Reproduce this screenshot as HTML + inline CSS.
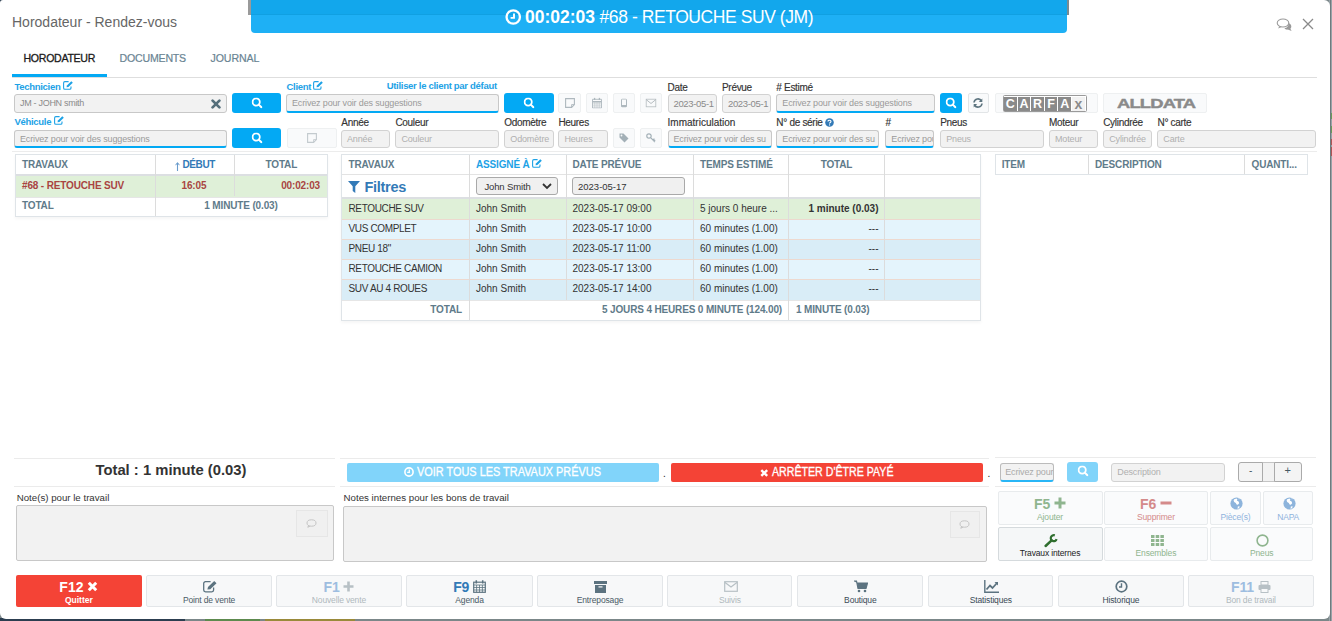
<!DOCTYPE html>
<html><head><meta charset="utf-8">
<style>
*{box-sizing:border-box;margin:0;padding:0}
html,body{width:1332px;height:621px;overflow:hidden;background:#7b8789;font-family:"Liberation Sans",sans-serif}
.a{position:absolute;white-space:nowrap}
#modal{position:absolute;left:0;top:0;width:1330px;height:619px;background:#fff;border-radius:3px 6px 6px 6px;overflow:hidden}
.lbl{position:absolute;white-space:nowrap;font-size:10px;color:#333;line-height:10px;letter-spacing:-0.3px;-webkit-text-stroke:0.15px #333;margin-top:0.8px}
.blbl{position:absolute;white-space:nowrap;font-size:9.5px;color:#1da2e6;font-weight:bold;line-height:10px;letter-spacing:-0.3px;margin-top:-1.2px}
.inp{position:absolute;background:#f2f2f2;border:1px solid #c8c8c8;border-radius:3px;height:19px;font-size:9px;letter-spacing:-0.15px;color:#9a9a9a;padding:0 0 0 5px;line-height:17px;overflow:hidden;white-space:nowrap}
.inp.bb{border-bottom:2px solid #03a9f4;line-height:16px}
.inp.dis{border-color:#d2d2d2;color:#b0b0b0}
.sbtn{position:absolute;background:#03a9f4;border-radius:3px;height:20px}
.sbtn svg{position:absolute;left:50%;top:50%;transform:translate(-50%,-50%)}
.ibtn{position:absolute;background:#f9fafb;border:1px solid #eef0f1;border-radius:2px;height:20px}
.ibtn svg{position:absolute;left:50%;top:50%;transform:translate(-50%,-50%)}
.th{position:absolute;white-space:nowrap;font-size:10px;font-weight:bold;color:#5f7b8a;line-height:12px;letter-spacing:-0.15px}
.td{position:absolute;white-space:nowrap;font-size:10px;color:#333;line-height:12px}
.hl{position:absolute;height:1px;background:#e3e3e3}
.vl{position:absolute;width:1px;background:#dcdcdc}
.tb{position:absolute;background:#f7f8f9;border:1px solid #e3e6e9;border-radius:2px}
.tb .k{position:absolute;left:0;right:0;text-align:center;white-space:nowrap;letter-spacing:-0.15px}
</style></head><body>
<!-- background strips -->
<div class="a" style="left:0;top:618px;width:185px;height:3px;background:#2c3e50"></div>
<div class="a" style="left:205px;top:618px;width:55px;height:3px;background:#5d8a4e"></div>
<div class="a" style="left:265px;top:618px;width:90px;height:3px;background:#9a8a3a"></div>
<div class="a" style="left:1329px;top:0;width:3px;height:621px;background:#98a3a8"></div>
<div class="a" style="left:1330px;top:0;width:1px;height:621px;background:#6f7b7e"></div>
<div class="a" style="left:1331px;top:113px;width:1px;height:6px;background:#6a9a5a"></div>
<div class="a" style="left:1331px;top:126px;width:1px;height:7px;background:#6a9a5a"></div>
<div class="a" style="left:1331px;top:139px;width:1px;height:6px;background:#b05555"></div>
<div class="a" style="left:1331px;top:147px;width:1px;height:9px;background:#b05555"></div>
<div class="a" style="left:0;top:0;width:8px;height:8px;background:#2c3e50"></div>

<div id="modal">
<!-- title -->
<div class="a" style="left:12px;top:14px;font-size:14px;line-height:16px;color:#666">Horodateur - Rendez-vous</div>

<!-- blue timer bar -->
<div class="a" style="left:248px;top:0;width:3px;height:15px;background:#9a9a9a"></div>
<div class="a" style="left:1067px;top:0;width:2px;height:15px;background:#7a8a90"></div>
<div class="a" style="left:251px;top:0;width:816px;height:33px;background:#1eb0f5;border-radius:0 0 4px 4px"></div>
<div class="a" style="left:251px;top:0;width:816px;height:15px;background:#12a7ec"></div><div class="a" style="left:251px;top:14px;width:816px;height:1px;background:#10a0e2"></div>
<svg class="a" style="left:505px;top:8.5px" width="16.5" height="16" viewBox="0 0 16.5 16"><circle cx="8.25" cy="8" r="6.7" fill="none" stroke="#fff" stroke-width="2.3"/><path d="M9 4.5V8.9H5.6" fill="none" stroke="#fff" stroke-width="1.9"/></svg>
<div class="a" style="left:525px;top:7px;font-size:17.5px;line-height:20px;color:#fff"><b>00:02:03</b><span style="letter-spacing:-0.42px"> #68 - RETOUCHE SUV (JM)</span></div>

<!-- header right icons -->
<svg class="a" style="left:1276px;top:17px" width="18" height="16" viewBox="0 0 18 16"><ellipse cx="7" cy="6" rx="5.8" ry="4" fill="none" stroke="#9a9a9a" stroke-width="1.1"/><path d="M3.2 9.3L2.2 11.6 5.6 10.1Z" fill="#9a9a9a"/><path d="M12.6 6.2C15.2 6.8 16.3 9.8 14.4 11.8L15.6 14 11.8 12.6C10.4 12.8 9 12.2 8.4 11.3 11.2 10.9 12.9 8.8 12.6 6.2Z" fill="#9a9a9a"/></svg>
<svg class="a" style="left:1302px;top:18px" width="12" height="12" viewBox="0 0 12 12"><path d="M1 1L11 11M11 1L1 11" stroke="#8a8a8a" stroke-width="1.3"/></svg>

<!-- tabs -->
<div class="a" style="left:23.5px;top:52px;font-size:10.6px;line-height:12px;color:#1a1a1a;letter-spacing:-0.3px;-webkit-text-stroke:0.3px #1a1a1a">HORODATEUR</div>
<div class="a" style="left:119.5px;top:52px;font-size:10.6px;line-height:12px;color:#6a8493;letter-spacing:-0.2px;-webkit-text-stroke:0.2px #6a8493">DOCUMENTS</div>
<div class="a" style="left:210.5px;top:52px;font-size:10.6px;line-height:12px;color:#6a8493;letter-spacing:-0.1px;-webkit-text-stroke:0.2px #6a8493">JOURNAL</div>
<div class="a" style="left:12px;top:77px;width:1305px;height:1px;background:#dedede"></div>
<div class="a" style="left:12px;top:74px;width:95px;height:3px;background:#03a9f4"></div>

<!-- ===== FORM ROW 1 ===== -->
<div class="blbl" style="left:14.5px;top:82px">Technicien <svg width="10" height="9" viewBox="0 0 10 9" style="vertical-align:0px"><path d="M5.6 0.6H1.9A1.3 1.3 0 0 0 0.6 1.9V6.9A1.3 1.3 0 0 0 1.9 8.2H6.7A1.3 1.3 0 0 0 8 6.9V5.4" fill="none" stroke="#1da2e6" stroke-width="1.1"/><path d="M3.5 6.3L3.9 4.6 8.3 0.2 9.8 1.7 5.4 6Z" fill="#1da2e6"/></svg></div>
<div class="inp" style="left:14px;top:94px;width:213px;color:#8a8a8a;letter-spacing:-0.3px">JM - JOHN smith</div>
<svg class="a" style="left:210.5px;top:98.5px" width="10" height="10" viewBox="0 0 10 10"><path d="M1.6 1.6L8.4 8.4M8.4 1.6L1.6 8.4" stroke="#56707c" stroke-width="2.7" stroke-linecap="round"/></svg>
<div class="sbtn" style="left:232px;top:93px;width:49px"><svg width="11" height="11" viewBox="0 0 11 11" style="margin-top:-0.5px"><circle cx="4.7" cy="4.5" r="3.6" fill="none" stroke="#fff" stroke-width="1.8"/><path d="M7.3 7.1L9.9 9.7" stroke="#fff" stroke-width="2" stroke-linecap="round"/></svg></div>

<div class="blbl" style="left:286.5px;top:82px">Client <svg width="10" height="9" viewBox="0 0 10 9" style="vertical-align:0px"><path d="M5.6 0.6H1.9A1.3 1.3 0 0 0 0.6 1.9V6.9A1.3 1.3 0 0 0 1.9 8.2H6.7A1.3 1.3 0 0 0 8 6.9V5.4" fill="none" stroke="#1da2e6" stroke-width="1.1"/><path d="M3.5 6.3L3.9 4.6 8.3 0.2 9.8 1.7 5.4 6Z" fill="#1da2e6"/></svg></div>
<div class="blbl" style="left:386.7px;top:82px">Utiliser le client par défaut</div>
<div class="inp bb" style="left:286px;top:94px;width:213px">Ecrivez pour voir des suggestions</div>
<div class="sbtn" style="left:504px;top:93px;width:50px"><svg width="11" height="11" viewBox="0 0 11 11" style="margin-top:-0.5px"><circle cx="4.7" cy="4.5" r="3.6" fill="none" stroke="#fff" stroke-width="1.8"/><path d="M7.3 7.1L9.9 9.7" stroke="#fff" stroke-width="2" stroke-linecap="round"/></svg></div>
<div class="ibtn" style="left:558px;top:93px;width:23px"><svg width="10" height="10" viewBox="0 0 10 10"><path d="M0.6 0.6H9.4V6.6L6.6 9.4H0.6Z" fill="none" stroke="#aeb8be" stroke-width="1.1"/><path d="M6.6 9.4V6.6H9.4" fill="none" stroke="#aeb8be" stroke-width="0.9"/></svg></div>
<div class="ibtn" style="left:586px;top:93px;width:22px"><svg width="10" height="11" viewBox="0 0 10 11"><path d="M0.5 1.8H9.5V10.5H0.5Z" fill="none" stroke="#aeb8be" stroke-width="0.9"/><path d="M0.5 4.3H9.5" stroke="#aeb8be" stroke-width="1.4"/><path d="M0.5 6.4h9M0.5 8.4h9M2.75 4v6.5M5 4v6.5M7.25 4v6.5" stroke="#b8c1c6" stroke-width="0.6"/><path d="M2.6 0.3v2.3M7.4 0.3v2.3" stroke="#aeb8be" stroke-width="1.3"/></svg></div>
<div class="ibtn" style="left:613px;top:93px;width:22px"><svg width="6" height="9" viewBox="0 0 6 9"><rect x="0.5" y="0.5" width="5" height="8" rx="0.8" fill="none" stroke="#aeb8be" stroke-width="1"/><rect x="0.5" y="6.5" width="5" height="2" fill="#aeb8be"/></svg></div>
<div class="ibtn" style="left:640px;top:93px;width:22px"><svg width="11" height="9" viewBox="0 0 11 9"><rect x="0.6" y="0.6" width="9.8" height="7.8" fill="none" stroke="#b5bcc0" stroke-width="1"/><path d="M0.6 1L5.5 5 10.4 1" fill="none" stroke="#b5bcc0"/></svg></div>

<div class="lbl" style="left:667.6px;top:82px">Date</div>
<div class="inp dis" style="left:667.5px;top:94px;width:49px;padding-left:5px;font-size:9.5px;letter-spacing:-0.35px;color:#8a8a8a">2023-05-1</div>
<div class="lbl" style="left:722px;top:82px">Prévue</div>
<div class="inp dis" style="left:722px;top:94px;width:49px;padding-left:5px;font-size:9.5px;letter-spacing:-0.35px;color:#8a8a8a">2023-05-1</div>
<div class="lbl" style="left:776.3px;top:82px"># Estimé</div>
<div class="inp bb" style="left:776.3px;top:94px;width:158.5px">Ecrivez pour voir des suggestions</div>
<div class="sbtn" style="left:940px;top:93px;width:22px"><svg width="11" height="11" viewBox="0 0 11 11" style="margin-top:-0.5px"><circle cx="4.7" cy="4.5" r="3.6" fill="none" stroke="#fff" stroke-width="1.8"/><path d="M7.3 7.1L9.9 9.7" stroke="#fff" stroke-width="2" stroke-linecap="round"/></svg></div>
<div class="ibtn" style="left:967.5px;top:93px;width:21px;border-color:#e2e5e7"><svg width="11" height="10" viewBox="0 0 11 10"><path d="M1.5 4.5A4 4 0 0 1 9 3" fill="none" stroke="#5e7580" stroke-width="1.6"/><path d="M9.8 0.5V4H6.3Z" fill="#5e7580"/><path d="M9.5 5.5A4 4 0 0 1 2 7" fill="none" stroke="#5e7580" stroke-width="1.6"/><path d="M1.2 9.5V6H4.7Z" fill="#5e7580"/></svg></div>
<div class="ibtn" style="left:994.5px;top:93px;width:103px">
 <div class="a" style="left:7px;top:1.2px;width:84px;height:16.6px;background:#fff;border:1px solid #9a9a9a;border-radius:1.5px"><div class="a" style="left:0.5px;top:0.5px;width:12.6px;height:14.6px;background:#8a8a8a;color:#fff;font-size:12.5px;line-height:14px;font-weight:bold;text-align:center">C</div><div class="a" style="left:14.1px;top:0.5px;width:12.6px;height:14.6px;background:#8a8a8a;color:#fff;font-size:12.5px;line-height:14px;font-weight:bold;text-align:center">A</div><div class="a" style="left:27.7px;top:0.5px;width:12.6px;height:14.6px;background:#8a8a8a;color:#fff;font-size:12.5px;line-height:14px;font-weight:bold;text-align:center">R</div><div class="a" style="left:41.3px;top:0.5px;width:12.6px;height:14.6px;background:#8a8a8a;color:#fff;font-size:12.5px;line-height:14px;font-weight:bold;text-align:center">F</div><div class="a" style="left:54.9px;top:0.5px;width:12.6px;height:14.6px;background:#8a8a8a;color:#fff;font-size:12.5px;line-height:14px;font-weight:bold;text-align:center">A</div><div class="a" style="left:68.5px;top:0.5px;width:13px;height:14.6px;background:#f2f2f2"></div><div class="a" style="left:69px;top:1px;width:12px;text-align:center;font-size:14px;line-height:15px;font-weight:bold;color:#8a8a8a">x</div></div>
</div>
<div class="ibtn" style="left:1103.2px;top:93px;width:104px">
 <div class="a" style="left:12.5px;top:2.5px;font-size:13.5px;line-height:14px;font-weight:bold;color:#8a8a8a;letter-spacing:-0.6px;transform:scaleX(1.36);transform-origin:0 0;-webkit-text-stroke:0.4px #8a8a8a">ALLDATA</div>
</div>

<!-- ===== FORM ROW 2 ===== -->
<div class="blbl" style="left:14.5px;top:117px">Véhicule <svg width="10" height="9" viewBox="0 0 10 9" style="vertical-align:0px"><path d="M5.6 0.6H1.9A1.3 1.3 0 0 0 0.6 1.9V6.9A1.3 1.3 0 0 0 1.9 8.2H6.7A1.3 1.3 0 0 0 8 6.9V5.4" fill="none" stroke="#1da2e6" stroke-width="1.1"/><path d="M3.5 6.3L3.9 4.6 8.3 0.2 9.8 1.7 5.4 6Z" fill="#1da2e6"/></svg></div>
<div class="inp bb" style="left:14px;top:129.5px;width:213px;height:18.5px">Ecrivez pour voir des suggestions</div>
<div class="sbtn" style="left:232px;top:128px;width:49px"><svg width="11" height="11" viewBox="0 0 11 11" style="margin-top:-0.5px"><circle cx="4.7" cy="4.5" r="3.6" fill="none" stroke="#fff" stroke-width="1.8"/><path d="M7.3 7.1L9.9 9.7" stroke="#fff" stroke-width="2" stroke-linecap="round"/></svg></div>
<div class="ibtn" style="left:286.5px;top:128px;width:50px"><svg width="10" height="10" viewBox="0 0 10 10"><path d="M0.6 0.6H9.4V6.6L6.6 9.4H0.6Z" fill="none" stroke="#c3cace" stroke-width="1.1"/><path d="M6.6 9.4V6.6H9.4" fill="none" stroke="#c3cace" stroke-width="0.9"/></svg></div>
<div class="lbl" style="left:341.3px;top:117px">Année</div>
<div class="inp dis" style="left:341px;top:129.5px;width:48.5px;height:18px">Année</div>
<div class="lbl" style="left:395.4px;top:117px">Couleur</div>
<div class="inp dis" style="left:395.4px;top:129.5px;width:103.3px;height:18px">Couleur</div>
<div class="lbl" style="left:504.3px;top:117px">Odomètre</div>
<div class="inp dis" style="left:504.3px;top:129.5px;width:49.4px;height:18px">Odomètre</div>
<div class="lbl" style="left:558.4px;top:117px">Heures</div>
<div class="inp dis" style="left:558.4px;top:129.5px;width:49.3px;height:18px">Heures</div>
<div class="ibtn" style="left:613px;top:128px;width:22px"><svg width="10" height="10" viewBox="0 0 10 10"><path d="M0.5 0.5H4.5L9.5 5.5 5.5 9.5 0.5 4.5Z" fill="#a3b0b7"/><circle cx="2.5" cy="2.5" r="0.9" fill="#f9fafb"/></svg></div>
<div class="ibtn" style="left:640px;top:128px;width:22px"><svg width="10" height="10" viewBox="0 0 10 10"><circle cx="3" cy="3" r="2.2" fill="none" stroke="#a3b0b7" stroke-width="1.2"/><path d="M4.6 4.6L9 9M7 7L8.4 5.6M8 8L9.2 6.8" stroke="#a3b0b7" stroke-width="1.2"/></svg></div>
<div class="lbl" style="left:667.6px;top:117px;letter-spacing:0">Immatriculation</div>
<div class="inp bb" style="left:667.5px;top:129.5px;width:104px;height:18px">Ecrivez pour voir des su</div>
<div class="lbl" style="left:776.3px;top:117px">N° de série <svg width="9" height="9" viewBox="0 0 9 9" style="vertical-align:-1px"><circle cx="4.5" cy="4.5" r="4.3" fill="#337ab7"/><path d="M3 3.4C3 1.8 6 1.8 6 3.4 6 4.5 4.5 4.4 4.5 5.6" fill="none" stroke="#fff" stroke-width="1.1"/><rect x="4" y="6.4" width="1.1" height="1.1" fill="#fff"/></svg></div>
<div class="inp bb" style="left:776.3px;top:129.5px;width:103.1px;height:18px">Ecrivez pour voir des su</div>
<div class="lbl" style="left:885.5px;top:117px">#</div>
<div class="inp bb" style="left:885.3px;top:129.5px;width:49.2px;height:18px">Ecrivez pour voir des suggestions</div>
<div class="lbl" style="left:940.2px;top:117px">Pneus</div>
<div class="inp dis" style="left:940.2px;top:129.5px;width:103.5px;height:18px">Pneus</div>
<div class="lbl" style="left:1049px;top:117px">Moteur</div>
<div class="inp dis" style="left:1049px;top:129.5px;width:48.5px;height:18px">Moteur</div>
<div class="lbl" style="left:1103.2px;top:117px">Cylindrée</div>
<div class="inp dis" style="left:1103.2px;top:129.5px;width:49.3px;height:18px">Cylindrée</div>
<div class="lbl" style="left:1157.5px;top:117px">N° carte</div>
<div class="inp dis" style="left:1157.3px;top:129.5px;width:158.5px;height:18px">Carte</div>

<div class="hl" style="left:12px;top:151px;width:1305px;background:#ececec"></div>

<!-- ===== LEFT TABLE ===== -->
<div class="a" style="left:14.5px;top:154px;width:313px;height:63px;border:1px solid #dfe4e8;background:#fff;box-shadow:0 2px 3px rgba(0,0,0,0.04)"></div>
<div class="a" style="left:15.5px;top:175px;width:311px;height:21.5px;background:#dff0d8"></div>
<div class="a" style="left:15.5px;top:174px;width:311px;height:2px;background:#dcdfe2"></div>
<div class="hl" style="left:15.5px;top:196.5px;width:311px;background:#e6e6e6"></div>
<div class="vl" style="left:155px;top:155px;height:61px"></div>
<div class="vl" style="left:233.5px;top:155px;height:41px"></div>
<div class="th" style="left:22px;top:159px;">TRAVAUX</div>
<svg class="a" style="left:174.5px;top:161.5px" width="5" height="9" viewBox="0 0 5 9"><path d="M2.5 1V9" stroke="#6a9ccc" stroke-width="1.1"/><path d="M0.6 3.2L2.5 0.6 4.4 3.2" fill="none" stroke="#6a9ccc" stroke-width="1"/></svg><div class="th" style="left:182.5px;top:159px;color:#337ab7;letter-spacing:-0.4px">DÉBUT</div>
<div class="th" style="left:265.5px;top:159px;">TOTAL</div>
<div class="th" style="left:22px;top:180px;color:#a94442;">#68 - RETOUCHE SUV</div>
<div class="th" style="left:181.5px;top:180px;color:#a94442;">16:05</div>
<div class="th" style="left:275px;top:180px;width:45px;text-align:right;color:#a94442;">00:02:03</div>
<div class="th" style="left:22px;top:200px;">TOTAL</div>
<div class="th" style="left:155px;top:200px;width:172px;text-align:center;">1 MINUTE (0.03)</div>

<!-- ===== MIDDLE TABLE ===== -->
<div class="a" style="left:341px;top:154px;width:640px;height:167px;border:1px solid #dfe4e8;background:#fff;box-shadow:0 2px 3px rgba(0,0,0,0.04)"></div>
<div class="hl" style="left:342px;top:174px;width:638px;background:#e3e3e3"></div>
<div class="a" style="left:342px;top:197px;width:638px;height:2px;background:#dcdfe2"></div>
<div class="a" style="left:342px;top:199px;width:638px;height:20.4px;background:#dff0d8"></div>
<div class="a" style="left:342px;top:219.4px;width:638px;height:20px;background:#e4f4fc"></div>
<div class="a" style="left:342px;top:239.3px;width:638px;height:20px;background:#d9edf7"></div>
<div class="a" style="left:342px;top:259.3px;width:638px;height:20px;background:#e4f4fc"></div>
<div class="a" style="left:342px;top:279.1px;width:638px;height:21.3px;background:#d9edf7"></div>
<div class="hl" style="left:342px;top:219px;width:638px;background:#edd9cf"></div>
<div class="hl" style="left:342px;top:239px;width:638px;background:#edd9cf"></div>
<div class="hl" style="left:342px;top:259px;width:638px;background:#edd9cf"></div>
<div class="hl" style="left:342px;top:279px;width:638px;background:#edd9cf"></div>
<div class="hl" style="left:342px;top:300px;width:638px;background:#e6e6e6"></div>
<div class="vl" style="left:469px;top:155px;height:165px"></div>
<div class="vl" style="left:565.5px;top:155px;height:145px"></div>
<div class="vl" style="left:692.5px;top:155px;height:145px"></div>
<div class="vl" style="left:788px;top:155px;height:165px"></div>
<div class="vl" style="left:884px;top:155px;height:145px"></div>
<div class="th" style="left:348.5px;top:159px">TRAVAUX</div>
<div class="th" style="left:476px;top:159px;color:#1da2e6">ASSIGNÉ À <svg width="10" height="9" viewBox="0 0 10 9" style="vertical-align:0px"><path d="M5.6 0.6H1.9A1.3 1.3 0 0 0 0.6 1.9V6.9A1.3 1.3 0 0 0 1.9 8.2H6.7A1.3 1.3 0 0 0 8 6.9V5.4" fill="none" stroke="#1da2e6" stroke-width="1.1"/><path d="M3.5 6.3L3.9 4.6 8.3 0.2 9.8 1.7 5.4 6Z" fill="#1da2e6"/></svg></div>
<div class="th" style="left:572.5px;top:159px">DATE PRÉVUE</div>
<div class="th" style="left:700px;top:159px">TEMPS ESTIMÉ</div>
<div class="th" style="left:788.5px;top:159px;width:96px;text-align:center">TOTAL</div>
<svg class="a" style="left:348px;top:181px" width="12" height="12" viewBox="0 0 12 12"><path d="M0 0H12L7.3 5.2V12L4.7 10V5.2Z" fill="#337ab7"/></svg>
<div class="a" style="left:364.5px;top:178.5px;font-size:14.5px;line-height:16px;font-weight:bold;color:#337ab7;letter-spacing:-0.3px">Filtres</div>
<div class="a" style="left:476px;top:177.3px;width:81.6px;height:18.2px;background:#f0f0f0;border:1px solid #a9a9a9;border-radius:3px"></div>
<div class="a" style="left:484.5px;top:181px;font-size:9.5px;line-height:12px;color:#333;letter-spacing:-0.15px">John Smith</div>
<svg class="a" style="left:542px;top:183px" width="10" height="7" viewBox="0 0 10 7"><path d="M1 1L5 5 9 1" fill="none" stroke="#333" stroke-width="1.8"/></svg>
<div class="a" style="left:572.3px;top:177.3px;width:113.2px;height:18.2px;background:#f0f0f0;border:1px solid #a9a9a9;border-radius:3px"></div>
<div class="a" style="left:578px;top:181px;font-size:9.5px;line-height:12px;color:#333">2023-05-17</div>

<div class="td" style="left:348.5px;top:203px;letter-spacing:-0.35px">RETOUCHE SUV</div>
<div class="td" style="left:476px;top:203px">John Smith</div>
<div class="td" style="left:572.5px;top:203px">2023-05-17 09:00</div>
<div class="td" style="left:700px;top:203px">5 jours 0 heure ...</div>
<div class="td" style="left:788.5px;top:203px;width:90px;text-align:right;font-weight:bold">1 minute (0.03)</div>
<div class="td" style="left:348.5px;top:223px;letter-spacing:-0.35px">VUS COMPLET</div>
<div class="td" style="left:476px;top:223px">John Smith</div>
<div class="td" style="left:572.5px;top:223px">2023-05-17 10:00</div>
<div class="td" style="left:700px;top:223px">60 minutes (1.00)</div>
<div class="td" style="left:788.5px;top:223px;width:90px;text-align:right">---</div>
<div class="td" style="left:348.5px;top:243px;letter-spacing:-0.35px">PNEU 18"</div>
<div class="td" style="left:476px;top:243px">John Smith</div>
<div class="td" style="left:572.5px;top:243px">2023-05-17 11:00</div>
<div class="td" style="left:700px;top:243px">60 minutes (1.00)</div>
<div class="td" style="left:788.5px;top:243px;width:90px;text-align:right">---</div>
<div class="td" style="left:348.5px;top:263px;letter-spacing:-0.35px">RETOUCHE CAMION</div>
<div class="td" style="left:476px;top:263px">John Smith</div>
<div class="td" style="left:572.5px;top:263px">2023-05-17 13:00</div>
<div class="td" style="left:700px;top:263px">60 minutes (1.00)</div>
<div class="td" style="left:788.5px;top:263px;width:90px;text-align:right">---</div>
<div class="td" style="left:348.5px;top:283px;letter-spacing:-0.35px">SUV AU 4 ROUES</div>
<div class="td" style="left:476px;top:283px">John Smith</div>
<div class="td" style="left:572.5px;top:283px">2023-05-17 14:00</div>
<div class="td" style="left:700px;top:283px">60 minutes (1.00)</div>
<div class="td" style="left:788.5px;top:283px;width:90px;text-align:right">---</div>
<div class="th" style="left:342px;top:304px;width:120px;text-align:right">TOTAL</div>
<div class="th" style="left:470px;top:304px;width:312px;text-align:right">5 JOURS 4 HEURES 0 MINUTE (124.00)</div>
<div class="th" style="left:796px;top:304px">1 MINUTE (0.03)</div>

<!-- ===== RIGHT TABLE ===== -->
<div class="a" style="left:994.5px;top:154px;width:313px;height:21px;border:1px solid #dfe4e8;background:#fff"></div>
<div class="vl" style="left:1088px;top:155px;height:19px"></div>
<div class="vl" style="left:1244px;top:155px;height:19px"></div>
<div class="th" style="left:1001.7px;top:159px">ITEM</div>
<div class="th" style="left:1095px;top:159px">DESCRIPTION</div>
<div class="th" style="left:1251.5px;top:159px">QUANTI...</div>

<!-- ===== BOTTOM SECTION ===== -->
<div class="hl" style="left:13.7px;top:458px;width:321.6px;background:#ebebeb"></div>
<div class="hl" style="left:340px;top:458px;width:649px;background:#ebebeb"></div>
<div class="hl" style="left:994.8px;top:457px;width:321px;background:#ebebeb"></div>
<div class="hl" style="left:13.7px;top:486px;width:321.6px;background:#ebebeb"></div>
<div class="hl" style="left:340px;top:486px;width:649px;background:#ebebeb"></div>
<div class="hl" style="left:994.8px;top:486px;width:321px;background:#ebebeb"></div>
<div class="a" style="left:10.5px;top:462px;width:321px;text-align:center;font-size:14.8px;line-height:17px;font-weight:bold;color:#333">Total : 1 minute (0.03)</div>

<div class="a" style="left:347.3px;top:463px;width:311.7px;height:18.8px;background:#81d4fa;border-radius:2px"></div>
<svg class="a" style="left:404px;top:467px" width="10" height="10" viewBox="0 0 10 10"><circle cx="5" cy="5" r="4.1" fill="none" stroke="#fff" stroke-width="1.6"/><path d="M5.3 2.6V5.4H3.2" fill="none" stroke="#fff" stroke-width="1.3"/></svg>
<div class="a" style="left:417px;top:465px;font-size:12.5px;line-height:14px;color:#fff;-webkit-text-stroke:0.3px #fff;transform:scaleX(0.873);transform-origin:0 0">VOIR TOUS LES TRAVAUX PRÉVUS</div>
<div class="a" style="left:663px;top:469px;font-size:10px;line-height:10px;color:#222">.</div>
<div class="a" style="left:671.2px;top:463px;width:311.8px;height:18.8px;background:#f44336;border-radius:2px"></div>
<svg class="a" style="left:760px;top:468.5px" width="8.5" height="8" viewBox="0 0 8.5 8"><path d="M1.3 1.2L7.2 6.8M7.2 1.2L1.3 6.8" stroke="#fff" stroke-width="2.4"/></svg>
<div class="a" style="left:771.8px;top:465px;font-size:12.5px;line-height:14px;color:#fff;-webkit-text-stroke:0.3px #fff;transform:scaleX(0.85);transform-origin:0 0">ARRÊTER D'ÊTRE PAYÉ</div>
<div class="a" style="left:987.5px;top:469px;font-size:10px;line-height:10px;color:#222">.</div>

<div class="inp bb" style="left:1000.2px;top:463px;width:53.5px;height:18.8px;border-color:#bbb;border-bottom-color:#29b6f6;color:#aaa;padding-left:4px">Ecrivez pour voir</div>
<div class="sbtn" style="left:1067px;top:462px;width:31px;height:19.8px;background:#81d4fa"><svg width="11" height="11" viewBox="0 0 11 11" style="margin-top:-0.5px"><circle cx="4.7" cy="4.5" r="3.6" fill="none" stroke="#fff" stroke-width="1.8"/><path d="M7.3 7.1L9.9 9.7" stroke="#fff" stroke-width="2" stroke-linecap="round"/></svg></div>
<div class="inp dis" style="left:1111.3px;top:463px;width:114px;height:18.8px">Description</div>
<div class="a" style="left:1262px;top:462.2px;width:13px;height:19.5px;border-top:1px solid #c4c4c4;border-bottom:1px solid #c4c4c4;background:#f2f2f2"></div>
<div class="a" style="left:1238.4px;top:462.2px;width:24.6px;height:19.5px;border:1px solid #aaa;border-radius:3px 0 0 3px;background:#f4f4f4"></div>
<div class="a" style="left:1274px;top:462.2px;width:27.6px;height:19.5px;border:1px solid #aaa;border-radius:0 3px 3px 0;background:#f4f4f4"></div>
<div class="a" style="left:1238.4px;top:465px;width:24.6px;text-align:center;font-size:10px;line-height:12px;color:#455a64">-</div>
<div class="a" style="left:1274px;top:464px;width:27.6px;text-align:center;font-size:11px;line-height:12px;color:#455a64">+</div>

<div class="a" style="left:16.7px;top:492px;font-size:9.7px;line-height:11px;color:#333">Note(s) pour le travail</div>
<div class="a" style="left:16.2px;top:505.3px;width:317.5px;height:56px;background:#f2f2f2;border:1px solid #c8c8c8;border-radius:2px"></div>
<div class="a" style="left:296.3px;top:510px;width:31.3px;height:26.5px;border:1px solid #e6e6e6;background:#f0f0f0"><svg class="a" style="left:8.5px;top:7.5px" width="11" height="9" viewBox="0 0 11 9"><ellipse cx="5.5" cy="4" rx="4.5" ry="3.2" fill="none" stroke="#c0c0c0" stroke-width="0.9"/><path d="M2.5 6.5L1.8 8.3 4 7" fill="none" stroke="#c0c0c0" stroke-width="0.9"/></svg></div>
<div class="a" style="left:343.6px;top:492px;font-size:9.7px;line-height:11px;color:#333">Notes internes pour les bons de travail</div>
<div class="a" style="left:343.4px;top:506.4px;width:644px;height:55.5px;background:#f2f2f2;border:1px solid #c8c8c8;border-radius:2px"></div>
<div class="a" style="left:949.7px;top:511.4px;width:30.7px;height:26.6px;border:1px solid #e6e6e6;background:#f0f0f0"><svg class="a" style="left:8.5px;top:7.5px" width="11" height="9" viewBox="0 0 11 9"><ellipse cx="5.5" cy="4" rx="4.5" ry="3.2" fill="none" stroke="#c0c0c0" stroke-width="0.9"/><path d="M2.5 6.5L1.8 8.3 4 7" fill="none" stroke="#c0c0c0" stroke-width="0.9"/></svg></div>

<!-- right action grid -->
<div class="tb" style="background:#fafbfc;border-color:#e8ebed;left:997.5px;top:490.5px;width:105px;height:34px">
 <div class="k" style="top:5px;font-size:14px;line-height:14px;font-weight:bold;color:#8fb58f">F5 <svg width="12" height="12" viewBox="0 0 12 12" style="vertical-align:0px"><path d="M6 0.5V11.5M0.5 6H11.5" stroke="#8fb58f" stroke-width="3"/></svg></div>
 <div class="k" style="top:20.5px;font-size:8.5px;line-height:10px;color:#8fb58f">Ajouter</div>
</div>
<div class="tb" style="background:#fafbfc;border-color:#e8ebed;left:1103.5px;top:490.5px;width:104.8px;height:34px">
 <div class="k" style="top:5px;font-size:14px;line-height:14px;font-weight:bold;color:#d48a8a">F6 <svg width="12" height="12" viewBox="0 0 12 12" style="vertical-align:0px"><path d="M0.5 6H11.5" stroke="#d48a8a" stroke-width="3"/></svg></div>
 <div class="k" style="top:20.5px;font-size:8.5px;line-height:10px;color:#d48a8a">Supprimer</div>
</div>
<div class="tb" style="background:#fafbfc;border-color:#e8ebed;left:1210px;top:490.5px;width:51px;height:34px">
 <svg class="a" style="left:19px;top:5px" width="13" height="13" viewBox="0 0 13 13"><circle cx="6.5" cy="6.5" r="6.1" fill="#8db4dc"/><path d="M4.2 2.2L6.6 1.6 7.4 2.6 6.8 3.4 8.6 4.4 9.2 6.2 7.8 7.8 6.6 7.6 5.8 6 4.2 5 3.6 3.4Z" fill="#fff"/><path d="M7.8 9.6L9.6 9.2 9.2 11 7.6 12Z" fill="#fff"/><path d="M8.4 1.2L9.6 1.6 9 2.4Z" fill="#fff"/></svg>
 <div class="k" style="top:20.5px;font-size:8.5px;line-height:10px;color:#8fb3dc">Pièce(s)</div>
</div>
<div class="tb" style="background:#fafbfc;border-color:#e8ebed;left:1262.9px;top:490.5px;width:50.5px;height:34px">
 <svg class="a" style="left:19px;top:5px" width="13" height="13" viewBox="0 0 13 13"><circle cx="6.5" cy="6.5" r="6.1" fill="#8db4dc"/><path d="M4.2 2.2L6.6 1.6 7.4 2.6 6.8 3.4 8.6 4.4 9.2 6.2 7.8 7.8 6.6 7.6 5.8 6 4.2 5 3.6 3.4Z" fill="#fff"/><path d="M7.8 9.6L9.6 9.2 9.2 11 7.6 12Z" fill="#fff"/><path d="M8.4 1.2L9.6 1.6 9 2.4Z" fill="#fff"/></svg>
 <div class="k" style="top:20.5px;font-size:8.5px;line-height:10px;color:#8fb3dc">NAPA</div>
</div>
<div class="tb" style="left:997.5px;top:527.4px;width:105px;height:34px;background:#f5f7f8;border-color:#d5dadd">
 <svg class="a" style="left:44px;top:4.5px" width="15" height="15" viewBox="0 0 15 15"><path d="M2.6 13L8.6 7.4" stroke="#2f6e2f" stroke-width="2.5" stroke-linecap="round"/><path d="M13.6 6.2A3 3 0 1 1 11.8 2.4" fill="none" stroke="#2f6e2f" stroke-width="2.2"/></svg>
 <div class="k" style="top:20px;font-size:8.5px;line-height:10px;color:#222">Travaux internes</div>
</div>
<div class="tb" style="background:#fafbfc;border-color:#e8ebed;left:1103.5px;top:527.4px;width:104.8px;height:34px">
 <svg class="a" style="left:46px;top:7px" width="13" height="11" viewBox="0 0 13 11"><path d="M0 0h3.5v3H0zM4.7 0h3.5v3H4.7zM9.4 0h3.5v3H9.4zM0 4h3.5v3H0zM4.7 4h3.5v3H4.7zM9.4 4h3.5v3H9.4zM0 8h3.5v3H0zM4.7 8h3.5v3H4.7zM9.4 8h3.5v3H9.4z" fill="#8fb58f"/></svg>
 <div class="k" style="top:20px;font-size:8.5px;line-height:10px;color:#8fb58f">Ensembles</div>
</div>
<div class="tb" style="background:#fafbfc;border-color:#e8ebed;left:1210px;top:527.4px;width:103.4px;height:34px">
 <svg class="a" style="left:45px;top:6px" width="13" height="13" viewBox="0 0 13 13"><circle cx="6.5" cy="6.5" r="5.4" fill="none" stroke="#8fb58f" stroke-width="1.6"/></svg>
 <div class="k" style="top:20px;font-size:8.5px;line-height:10px;color:#8fb58f">Pneus</div>
</div>

<!-- ===== BOTTOM TOOLBAR ===== -->
<div class="a" style="left:16px;top:575px;width:125.7px;height:32px;background:#f44336;border-radius:2px">
 <div class="a" style="left:0;right:0;top:5px;text-align:center;font-size:14px;line-height:14px;font-weight:bold;color:#fff">F12 <svg width="11" height="11" viewBox="0 0 11 11" style="vertical-align:0"><path d="M1.8 1.8L9.2 9.2M9.2 1.8L1.8 9.2" stroke="#fff" stroke-width="3"/></svg></div>
 <div class="a" style="left:0;right:0;top:20px;text-align:center;font-size:8.5px;line-height:10px;font-weight:bold;color:#fff">Quitter</div>
</div>
<div class="tb" style="left:146.3px;top:575px;width:125.5px;height:32px">
 <svg class="a" style="left:55.5px;top:4.5px" width="14" height="12" viewBox="0 0 14 12"><path d="M7.6 0.7H2.5A1.8 1.8 0 0 0 0.7 2.5V9A1.8 1.8 0 0 0 2.5 10.8H8.8A1.8 1.8 0 0 0 10.6 9V6.6" fill="none" stroke="#5c7380" stroke-width="1.3"/><path d="M4.4 8.6L5 6.1 11.2 0 13.5 2.3 7.3 8.3Z" fill="#5c7380"/></svg>
 <div class="k" style="top:19px;font-size:8.5px;line-height:10px;color:#4a5a66">Point de vente</div>
</div>
<div class="tb" style="left:276.2px;top:575px;width:125.5px;height:32px">
 <div class="k" style="top:4px;font-size:14px;line-height:14px;font-weight:bold;color:#9dbde0">F1 <svg width="11" height="11" viewBox="0 0 11 11" style="vertical-align:0"><path d="M5.5 0.5V10.5M0.5 5.5H10.5" stroke="#b7c0c5" stroke-width="2.6"/></svg></div>
 <div class="k" style="top:19px;font-size:8.5px;line-height:10px;color:#b0b8bd">Nouvelle vente</div>
</div>
<div class="tb" style="left:406.3px;top:575px;width:126.5px;height:32px">
 <div class="k" style="top:4px;font-size:14px;line-height:14px;font-weight:bold;color:#337ab7">F9 <svg width="13" height="13" viewBox="0 0 13 13" style="vertical-align:-1px"><rect x="0.7" y="2.2" width="11.6" height="10.1" fill="none" stroke="#5c7380" stroke-width="1.2"/><path d="M0.7 5H12.3M0.7 7.5H12.3M0.7 10H12.3M3.6 5V12.3M6.5 5V12.3M9.4 5V12.3" stroke="#5c7380" stroke-width="0.8"/><path d="M3.3 0.3V3.5M9.7 0.3V3.5" stroke="#5c7380" stroke-width="1.5"/></svg></div>
 <div class="k" style="top:19px;font-size:8.5px;line-height:10px;color:#4a5a66">Agenda</div>
</div>
<div class="tb" style="left:537.3px;top:575px;width:125.5px;height:32px">
 <svg class="a" style="left:56px;top:5px" width="13" height="12" viewBox="0 0 13 12"><rect x="0" y="0" width="13" height="3" fill="#5c7380"/><rect x="1" y="4" width="11" height="8" fill="#5c7380"/><rect x="4.5" y="5.3" width="4" height="1.2" fill="#f7f8f9"/></svg>
 <div class="k" style="top:19px;font-size:8.5px;line-height:10px;color:#4a5a66">Entreposage</div>
</div>
<div class="tb" style="left:667.4px;top:575px;width:125px;height:32px">
 <svg class="a" style="left:56px;top:5px" width="14" height="11" viewBox="0 0 14 11"><rect x="0.7" y="0.7" width="12.6" height="9.6" fill="none" stroke="#b7c0c5" stroke-width="1.2"/><path d="M0.7 1.2L7 6 13.3 1.2" fill="none" stroke="#b7c0c5" stroke-width="1.2"/></svg>
 <div class="k" style="top:19px;font-size:8.5px;line-height:10px;color:#b0b8bd">Suivis</div>
</div>
<div class="tb" style="left:797.3px;top:575px;width:126px;height:32px">
 <svg class="a" style="left:56px;top:4px" width="14" height="13" viewBox="0 0 14 13"><path d="M0 1H2.5L4 8.5H12L13.5 3H3" fill="#5c7380" stroke="#5c7380" stroke-width="1.2"/><circle cx="5" cy="11" r="1.3" fill="#5c7380"/><circle cx="11" cy="11" r="1.3" fill="#5c7380"/></svg>
 <div class="k" style="top:19px;font-size:8.5px;line-height:10px;color:#3a4a56">Boutique</div>
</div>
<div class="tb" style="left:928.4px;top:575px;width:125px;height:32px">
 <svg class="a" style="left:55px;top:4px" width="15" height="13" viewBox="0 0 15 13"><path d="M0.8 0V12.2H15" fill="none" stroke="#5c7380" stroke-width="1.4"/><path d="M2.5 9.5L6 5.5 8.5 8 13 3" fill="none" stroke="#5c7380" stroke-width="1.8"/><path d="M10.5 2H14V5.5Z" fill="#5c7380"/></svg>
 <div class="k" style="top:19px;font-size:8.5px;line-height:10px;color:#3a4a56">Statistiques</div>
</div>
<div class="tb" style="left:1058.3px;top:575px;width:125.3px;height:32px">
 <svg class="a" style="left:56px;top:4px" width="13" height="13" viewBox="0 0 13 13"><circle cx="6.5" cy="6.5" r="5.3" fill="none" stroke="#5c7380" stroke-width="1.7"/><path d="M6.5 3.2V7H4" fill="none" stroke="#5c7380" stroke-width="1.4"/></svg>
 <div class="k" style="top:19px;font-size:8.5px;line-height:10px;color:#3a4a56">Historique</div>
</div>
<div class="tb" style="left:1188.2px;top:575px;width:125.5px;height:32px">
 <div class="k" style="top:4px;font-size:14px;line-height:14px;font-weight:bold;color:#9dbde0">F11 <svg width="13" height="12" viewBox="0 0 13 12" style="vertical-align:-1px"><rect x="3" y="0.5" width="7" height="3.5" fill="none" stroke="#b7c0c5" stroke-width="1"/><rect x="0.5" y="4" width="12" height="5" rx="1" fill="#b7c0c5"/><rect x="3" y="7.5" width="7" height="4" fill="#f7f8f9" stroke="#b7c0c5" stroke-width="1"/></svg></div>
 <div class="k" style="top:19px;font-size:8.5px;line-height:10px;color:#b0b8bd">Bon de travail</div>
</div>

</div>
</body></html>
